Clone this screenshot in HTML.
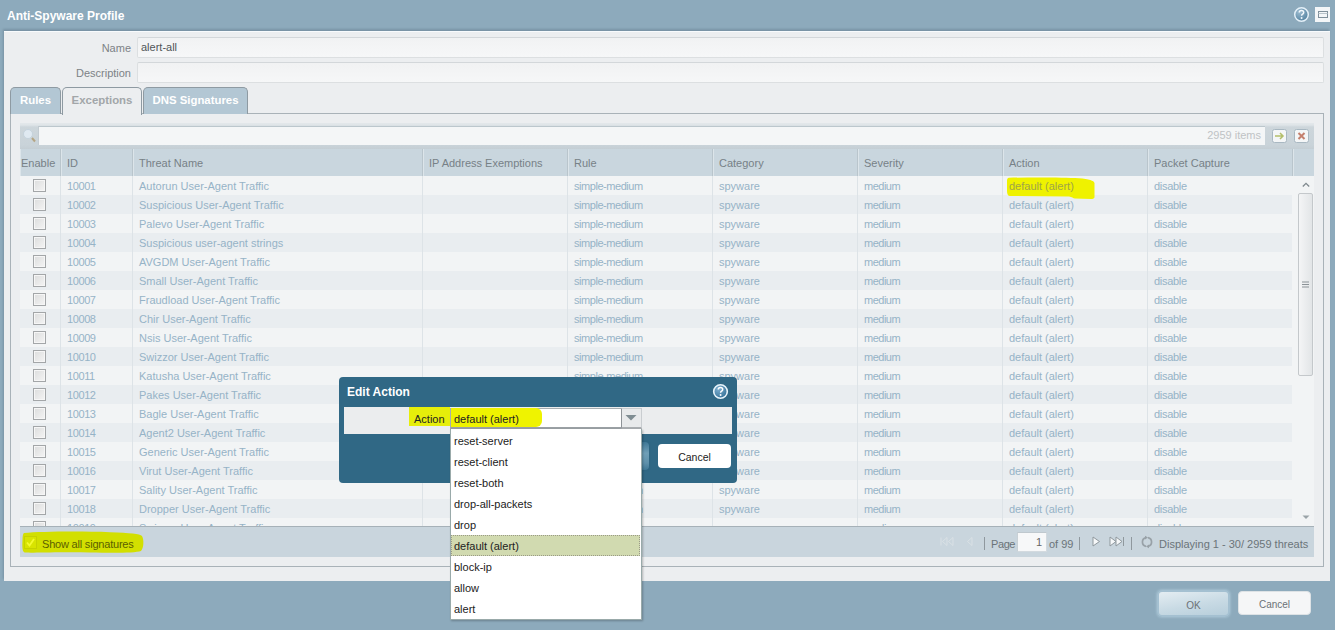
<!DOCTYPE html>
<html><head><meta charset="utf-8">
<style>
*{box-sizing:border-box;margin:0;padding:0}
html,body{width:1335px;height:630px;overflow:hidden}
body{background:#8daabc;font-family:"Liberation Sans",sans-serif;font-size:11px;color:#555;position:relative}
.abs{position:absolute}
#title{position:absolute;left:7px;top:9px;font-weight:bold;font-size:12px;color:#fff;line-height:14px}
#panel{position:absolute;left:4px;top:31px;width:1326px;height:550px;background:#eceef0;box-shadow:-1px -2px 2px rgba(60,80,95,0.25),inset 0 1px 0 #f8fbfd}
.lbl{position:absolute;width:127px;text-align:right;color:#7c8286;line-height:14px}
.inp{position:absolute;left:133px;width:1187px;height:21px;background:linear-gradient(#f1f2f3,#f6f7f8);border:1px solid #dcdfe1;border-top-color:#d3d7da;border-radius:2px;line-height:19px;padding-left:3px;color:#505558}
.tab{position:absolute;top:56px;height:27px;border:1px solid #8e9aa2;border-bottom:none;border-radius:5px 5px 0 0;background:#b3c7d4;color:#fff;font-weight:bold;font-size:11.4px;text-align:center;line-height:25px}
.tab.act{background:#eceef0;color:#a2a6a9;height:28px}
#tabpanel{position:absolute;left:6px;top:82px;width:1314px;height:454px;border:1px solid #a9b2b8;background:#eceef0}
#grid{position:absolute;left:16px;top:92px;width:1294px;height:434px;background:linear-gradient(to bottom,#e3e8eb 0,#dfe5e8 2px,#cdd6db 4px,#c9d3d9 22px,#c4ced4 26px,#c9d6de 26px)}
#search{position:absolute;left:18px;top:3px;width:1227px;height:19px;background:#f4f6f7;border-top:1px solid #bcc7cd;border-left:1px solid #c3ccd2}
#items{position:absolute;right:4px;top:1px;color:#bfc3c5;line-height:14px}
#hdr{position:absolute;left:0;top:26px;width:1294px;height:27px;background:#c9d6de}
.h{position:absolute;top:0;height:27px;line-height:29px;padding-left:6px;color:#778187;border-left:1px solid #b9c5cc;box-shadow:inset 1px 0 0 #dce5ea}
#body{position:absolute;left:0;top:53px;width:1294px;height:350px;overflow:hidden;background:#f2f4f5}
.r{position:absolute;left:0;width:1272px;height:19px;line-height:20px}
.odd{background:#f2f4f5}
.even{background:#e9edf0}
.c{position:absolute;top:0;height:19px;padding-left:6px;color:#96b3c7;border-left:1px solid #dde3e7;white-space:nowrap}
.c0{left:0;width:41px;border-left:none}
.c1{left:40px;width:72px;letter-spacing:-0.4px}
.c2{left:112px;width:290px}
.c3{left:402px;width:145px}
.c4{left:547px;width:145px;letter-spacing:-0.45px}
.c5{left:692px;width:145px}
.c6{left:837px;width:145px;letter-spacing:-0.5px}
.c7{left:982px;width:145px}
.c8{left:1127px;width:145px;letter-spacing:-0.3px}
.cb{position:absolute;left:13px;top:3px;width:13px;height:13px;border:1px solid #a3a6a8;background:linear-gradient(135deg,#dcdddd,#f4f4f4);box-shadow:inset 0 0 0 1px #f6f6f6}
.hl1{position:absolute;left:4px;top:2px;width:72px;height:17px;background:#eff200;border-radius:3px 6px 3px 4px}.hl2{position:absolute;left:62px;top:5px;width:29px;height:18px;background:#eff200;border-radius:2px 4px 3px 8px}
#vscroll{position:absolute;left:1272px;top:0;width:22px;height:350px;background:#f2f4f5}
#footer{position:absolute;left:0;top:403px;width:1294px;height:31px;background:#c9d5dd;border-top:1px solid #a6b1b8}
.btn{position:absolute;height:25px;border-radius:4px;text-align:center;line-height:25px;color:#5f6569;font-size:12px}
#dlg{position:absolute;left:339px;top:377px;width:398px;height:106px;background:#306885;border-radius:4px}
#dlgt{position:absolute;left:8px;top:8px;color:#fff;font-weight:bold;font-size:12px;line-height:14px}
#dbar{position:absolute;left:5px;top:30px;width:388px;height:27px;background:#ebedee}
#list{position:absolute;left:450px;top:429px;width:192px;height:191px;background:#fff;border:1px solid #9aa;border-top:none;box-shadow:1px 1px 2px rgba(0,0,0,.25)}
.li{position:absolute;left:0;width:189px;height:21px;line-height:24px;padding-left:3px;color:#222;font-size:11px}
</style></head><body>
<div id="title">Anti-Spyware Profile</div>
<svg class="abs" style="left:1293px;top:6px" width="17" height="17" viewBox="0 0 17 17"><defs><radialGradient id="hg" cx="0.35" cy="0.3" r="0.8"><stop offset="0" stop-color="#9dbcd0"/><stop offset="1" stop-color="#4f7f9e"/></radialGradient></defs><circle cx="8.5" cy="8.5" r="6.8" fill="url(#hg)" stroke="#e4f0f8" stroke-width="1.5"/><path d="M6.3 6.6 Q6.3 4.6 8.5 4.6 Q10.7 4.6 10.7 6.5 Q10.7 7.7 9.3 8.3 Q8.6 8.7 8.6 9.8" fill="none" stroke="#f2f8fc" stroke-width="1.5"/><circle cx="8.6" cy="12" r="0.95" fill="#f2f8fc"/></svg>
<svg class="abs" style="left:1315px;top:7px" width="15" height="15" viewBox="0 0 15 15"><rect x="0" y="0" width="15" height="15" fill="#f3f6f8"/><rect x="3.5" y="4.5" width="9" height="6" fill="none" stroke="#7f8f9a" stroke-width="1"/><line x1="3.5" y1="6.5" x2="12.5" y2="6.5" stroke="#b9c4cb" stroke-width="1"/></svg>
<div id="panel">
  <div class="lbl" style="left:0;top:10px">Name</div>
  <div class="inp" style="top:6px">alert-all</div>
  <div class="lbl" style="left:0;top:35px">Description</div>
  <div class="inp" style="top:31px"></div>
  <div id="tabpanel"></div>
  <div class="tab" style="left:6px;width:51px">Rules</div>
  <div class="tab act" style="left:58px;width:80px">Exceptions</div>
  <div class="tab" style="left:139px;width:105px">DNS Signatures</div>
  <div id="grid">
    <svg class="abs" style="left:2px;top:4px" width="16" height="16" viewBox="0 0 16 16"><circle cx="6" cy="7" r="4.5" fill="#dfe9f1" stroke="#c0cfd9" stroke-width="0.8"/><line x1="10" y1="11" x2="13" y2="14.5" stroke="#b5a583" stroke-width="2"/></svg>
    <div id="search"><div id="items">2959 items</div></div>
    <svg class="abs" style="left:1252px;top:6px" width="15" height="14" viewBox="0 0 15 14"><rect x="0.5" y="0.5" width="14" height="13" rx="2" fill="#f4f6f7" stroke="#a9b8c2"/><path d="M3 7 H11 M8 4 L11 7 L8 10" stroke="#b3be6a" stroke-width="1.5" fill="none"/></svg>
    <svg class="abs" style="left:1274px;top:6px" width="15" height="14" viewBox="0 0 15 14"><rect x="0.5" y="0.5" width="14" height="13" rx="2" fill="#f4f6f7" stroke="#a9b8c2"/><path d="M4.5 4 L10.5 10 M10.5 4 L4.5 10" stroke="#c4806e" stroke-width="2" fill="none"/></svg>
    <div id="hdr">
      <div class="h" style="left:0;width:41px;border-left:none;padding-left:1px">Enable</div>
      <div class="h" style="left:40px;width:72px">ID</div>
      <div class="h" style="left:112px;width:290px">Threat Name</div>
      <div class="h" style="left:402px;width:145px">IP Address Exemptions</div>
      <div class="h" style="left:547px;width:145px">Rule</div>
      <div class="h" style="left:692px;width:145px">Category</div>
      <div class="h" style="left:837px;width:145px">Severity</div>
      <div class="h" style="left:982px;width:145px">Action</div>
      <div class="h" style="left:1127px;width:145px">Packet Capture</div>
      <div class="h" style="left:1272px;width:22px"></div>
    </div>
    <div id="body">
<div class="r odd" style="top:0px;z-index:2"><div class="c c0"><i class="cb"></i></div><div class="c c1">10001</div><div class="c c2">Autorun User-Agent Traffic</div><div class="c c3"></div><div class="c c4">simple-medium</div><div class="c c5">spyware</div><div class="c c6">medium</div><div class="c c7"><svg style="position:absolute;left:0;top:0" width="100" height="26" viewBox="0 0 100 26"><path d="M6 1.8 C30 1.2 60 1.4 76 2.2 C86 3 91 4.5 91.5 7 L91.5 21 C91.5 22.5 90 23 88 23 L72 22.6 C70 22.4 69 21 66 20.6 L7 20 C5 20 4 18 4 15 L4 5 C4 3 4.5 2 6 1.8 Z" fill="#eff200"/></svg><span style="position:relative;color:#9ea548">default (alert)</span></div><div class="c c8">disable</div></div>
<div class="r even" style="top:19px"><div class="c c0"><i class="cb"></i></div><div class="c c1">10002</div><div class="c c2">Suspicious User-Agent Traffic</div><div class="c c3"></div><div class="c c4">simple-medium</div><div class="c c5">spyware</div><div class="c c6">medium</div><div class="c c7">default (alert)</div><div class="c c8">disable</div></div>
<div class="r odd" style="top:38px"><div class="c c0"><i class="cb"></i></div><div class="c c1">10003</div><div class="c c2">Palevo User-Agent Traffic</div><div class="c c3"></div><div class="c c4">simple-medium</div><div class="c c5">spyware</div><div class="c c6">medium</div><div class="c c7">default (alert)</div><div class="c c8">disable</div></div>
<div class="r even" style="top:57px"><div class="c c0"><i class="cb"></i></div><div class="c c1">10004</div><div class="c c2">Suspicious user-agent strings</div><div class="c c3"></div><div class="c c4">simple-medium</div><div class="c c5">spyware</div><div class="c c6">medium</div><div class="c c7">default (alert)</div><div class="c c8">disable</div></div>
<div class="r odd" style="top:76px"><div class="c c0"><i class="cb"></i></div><div class="c c1">10005</div><div class="c c2">AVGDM User-Agent Traffic</div><div class="c c3"></div><div class="c c4">simple-medium</div><div class="c c5">spyware</div><div class="c c6">medium</div><div class="c c7">default (alert)</div><div class="c c8">disable</div></div>
<div class="r even" style="top:95px"><div class="c c0"><i class="cb"></i></div><div class="c c1">10006</div><div class="c c2">Small User-Agent Traffic</div><div class="c c3"></div><div class="c c4">simple-medium</div><div class="c c5">spyware</div><div class="c c6">medium</div><div class="c c7">default (alert)</div><div class="c c8">disable</div></div>
<div class="r odd" style="top:114px"><div class="c c0"><i class="cb"></i></div><div class="c c1">10007</div><div class="c c2">Fraudload User-Agent Traffic</div><div class="c c3"></div><div class="c c4">simple-medium</div><div class="c c5">spyware</div><div class="c c6">medium</div><div class="c c7">default (alert)</div><div class="c c8">disable</div></div>
<div class="r even" style="top:133px"><div class="c c0"><i class="cb"></i></div><div class="c c1">10008</div><div class="c c2">Chir User-Agent Traffic</div><div class="c c3"></div><div class="c c4">simple-medium</div><div class="c c5">spyware</div><div class="c c6">medium</div><div class="c c7">default (alert)</div><div class="c c8">disable</div></div>
<div class="r odd" style="top:152px"><div class="c c0"><i class="cb"></i></div><div class="c c1">10009</div><div class="c c2">Nsis User-Agent Traffic</div><div class="c c3"></div><div class="c c4">simple-medium</div><div class="c c5">spyware</div><div class="c c6">medium</div><div class="c c7">default (alert)</div><div class="c c8">disable</div></div>
<div class="r even" style="top:171px"><div class="c c0"><i class="cb"></i></div><div class="c c1">10010</div><div class="c c2">Swizzor User-Agent Traffic</div><div class="c c3"></div><div class="c c4">simple-medium</div><div class="c c5">spyware</div><div class="c c6">medium</div><div class="c c7">default (alert)</div><div class="c c8">disable</div></div>
<div class="r odd" style="top:190px"><div class="c c0"><i class="cb"></i></div><div class="c c1">10011</div><div class="c c2">Katusha User-Agent Traffic</div><div class="c c3"></div><div class="c c4">simple-medium</div><div class="c c5">spyware</div><div class="c c6">medium</div><div class="c c7">default (alert)</div><div class="c c8">disable</div></div>
<div class="r even" style="top:209px"><div class="c c0"><i class="cb"></i></div><div class="c c1">10012</div><div class="c c2">Pakes User-Agent Traffic</div><div class="c c3"></div><div class="c c4">simple-medium</div><div class="c c5">spyware</div><div class="c c6">medium</div><div class="c c7">default (alert)</div><div class="c c8">disable</div></div>
<div class="r odd" style="top:228px"><div class="c c0"><i class="cb"></i></div><div class="c c1">10013</div><div class="c c2">Bagle User-Agent Traffic</div><div class="c c3"></div><div class="c c4">simple-medium</div><div class="c c5">spyware</div><div class="c c6">medium</div><div class="c c7">default (alert)</div><div class="c c8">disable</div></div>
<div class="r even" style="top:247px"><div class="c c0"><i class="cb"></i></div><div class="c c1">10014</div><div class="c c2">Agent2 User-Agent Traffic</div><div class="c c3"></div><div class="c c4">simple-medium</div><div class="c c5">spyware</div><div class="c c6">medium</div><div class="c c7">default (alert)</div><div class="c c8">disable</div></div>
<div class="r odd" style="top:266px"><div class="c c0"><i class="cb"></i></div><div class="c c1">10015</div><div class="c c2">Generic User-Agent Traffic</div><div class="c c3"></div><div class="c c4">simple-medium</div><div class="c c5">spyware</div><div class="c c6">medium</div><div class="c c7">default (alert)</div><div class="c c8">disable</div></div>
<div class="r even" style="top:285px"><div class="c c0"><i class="cb"></i></div><div class="c c1">10016</div><div class="c c2">Virut User-Agent Traffic</div><div class="c c3"></div><div class="c c4">simple-medium</div><div class="c c5">spyware</div><div class="c c6">medium</div><div class="c c7">default (alert)</div><div class="c c8">disable</div></div>
<div class="r odd" style="top:304px"><div class="c c0"><i class="cb"></i></div><div class="c c1">10017</div><div class="c c2">Sality User-Agent Traffic</div><div class="c c3"></div><div class="c c4">simple-medium</div><div class="c c5">spyware</div><div class="c c6">medium</div><div class="c c7">default (alert)</div><div class="c c8">disable</div></div>
<div class="r even" style="top:323px"><div class="c c0"><i class="cb"></i></div><div class="c c1">10018</div><div class="c c2">Dropper User-Agent Traffic</div><div class="c c3"></div><div class="c c4">simple-medium</div><div class="c c5">spyware</div><div class="c c6">medium</div><div class="c c7">default (alert)</div><div class="c c8">disable</div></div>
<div class="r odd" style="top:342px"><div class="c c0"><i class="cb"></i></div><div class="c c1">10019</div><div class="c c2">Swizzor User-Agent Traffic</div><div class="c c3"></div><div class="c c4">simple-medium</div><div class="c c5">spyware</div><div class="c c6">medium</div><div class="c c7">default (alert)</div><div class="c c8">disable</div></div>
      <div id="vscroll">
        
        <svg class="abs" style="left:10px;top:6px" width="8" height="5" viewBox="0 0 8 5"><path d="M0.8 4.5 L4 1.3 L7.2 4.5" fill="none" stroke="#7f898e" stroke-width="1.3"/></svg>
        <div class="abs" style="left:6px;top:17px;width:15px;height:183px;border:1px solid #c4c8cb;border-radius:2px;background:linear-gradient(to right,#f4f5f6,#e2e5e7)"></div>
        <svg class="abs" style="left:10px;top:105px" width="8" height="7" viewBox="0 0 8 7"><path d="M0 1 H7 M0 3.5 H7 M0 6 H7" stroke="#8b9297" stroke-width="1"/></svg>
        <svg class="abs" style="left:10px;top:339px" width="8" height="5" viewBox="0 0 8 5"><path d="M0.5 0.5 L7.5 0.5 L4 4 Z" fill="#9aa3a8"/></svg>
      </div>
    </div>
    <div id="footer"></div>
  </div>
</div>

<svg class="abs" style="left:20px;top:528px" width="128" height="28" viewBox="0 0 128 28"><path d="M4 5 C20 3.5 60 3 90 4.2 C110 5 120 5.5 122 8 C124 11 124 20 121 23 C115 25 95 25 70 24.5 C40 24 15 25 5 24.5 C2.5 24 2 20 2.5 12 C2.6 8 3 5.5 4 5 Z" fill="#d2df00"/></svg>
<div class="abs" style="left:24px;top:536px;width:13px;height:13px;background:#d8e400;border:1px solid #c6d100"></div>
<svg class="abs" style="left:25px;top:537px" width="11" height="11" viewBox="0 0 11 11"><path d="M2 5.5 L4.5 8.5 L9 2" fill="none" stroke="#f4fa30" stroke-width="1.8"/></svg>
<div class="abs" style="left:42px;top:537px;color:#5b6000;line-height:14px;font-size:11px;letter-spacing:-0.2px">Show all signatures</div>
<svg class="abs" style="left:940px;top:537px" width="15" height="9" viewBox="0 0 15 9"><path d="M1 0.5 V8.5 M7 0.5 L2.5 4.5 L7 8.5 Z M13 0.5 L8.5 4.5 L13 8.5 Z" fill="none" stroke="#d9e0e5" stroke-width="1"/></svg>
<svg class="abs" style="left:966px;top:537px" width="7" height="9" viewBox="0 0 7 9"><path d="M6 0.5 L1.5 4.5 L6 8.5 Z" fill="none" stroke="#d9e0e5" stroke-width="1"/></svg>
<div class="abs" style="left:984px;top:537px;width:1px;height:13px;background:#8f989e"></div>
<div class="abs" style="left:991px;top:537px;color:#6b7479;line-height:14px;font-size:11px;letter-spacing:-0.4px">Page</div>
<div class="abs" style="left:1017px;top:532px;width:30px;height:20px;background:#f7f8f9;border:1px solid #d3dadf;border-top-color:#bfc8ce;border-left-color:#c8d0d5;text-align:right;padding-right:4px;line-height:19px;color:#666;font-size:11px">1</div>
<div class="abs" style="left:1049px;top:537px;color:#6b7479;line-height:14px;font-size:11px">of 99</div>
<div class="abs" style="left:1079px;top:537px;width:1px;height:13px;background:#8f989e"></div>
<svg class="abs" style="left:1092px;top:536px" width="9" height="11" viewBox="0 0 9 11"><path d="M1 1 L7.5 5.5 L1 10 Z" fill="#f6f8f9" stroke="#8f989d" stroke-width="1" stroke-linejoin="round"/></svg>
<svg class="abs" style="left:1109px;top:536px" width="16" height="11" viewBox="0 0 16 11"><path d="M1 1 L7 5.5 L1 10 Z M7 1 L13 5.5 L7 10 Z" fill="#f6f8f9" stroke="#8f989d" stroke-width="1" stroke-linejoin="round"/><path d="M14.5 1 V10" stroke="#8f989d" stroke-width="1"/></svg>
<div class="abs" style="left:1131px;top:537px;width:1px;height:13px;background:#8f989e"></div>
<svg class="abs" style="left:1140px;top:535px" width="14" height="14" viewBox="0 0 14 14"><path d="M6 2.6 A4.5 4.5 0 0 0 6 11.4 M8 11.4 A4.5 4.5 0 0 0 8 2.6" fill="none" stroke="#98a1a7" stroke-width="1.7"/><path d="M5 0.8 L8 2.6 L5 4.6 Z M9 9.4 L6 11.4 L9 13.2 Z" fill="#98a1a7"/></svg>
<div class="abs" style="left:1159px;top:537px;color:#6b7479;line-height:14px;font-size:11px">Displaying 1 - 30/ 2959 threats</div>
<div class="btn" style="left:1157px;top:590px;width:73px;height:27px;line-height:27px;font-size:10px;color:#6b7276;background:linear-gradient(170deg,#e4edf2,#c8dae4 55%,#b7cedb);border:2px solid #a4c0d1;border-radius:5px;box-shadow:0 0 2px 1px #9fbccd">OK</div>
<div class="btn" style="left:1238px;top:591px;width:73px;height:24px;line-height:25px;font-size:10px;color:#6b7276;background:#f5f6f7;border:1px solid #dde2e5">Cancel</div>
<div id="dlg">
  <div id="dlgt">Edit Action</div>
  <div id="dbar">
    <div class="abs" style="left:65px;top:0px;width:41px;height:19px;background:#e6ee0a"></div>
    <div class="abs" style="left:70px;top:5px;color:#222;line-height:14px;font-size:11px">Action</div>
    <div class="abs" style="left:106px;top:1px;width:172px;height:21px;background:#fff;border:1px solid #a7adb1;border-bottom:2px solid #9aa0a4"></div>
    <div class="abs" style="left:107px;top:1px;width:91px;height:19px;background:#eff300;border-radius:0 6px 6px 0"></div>
    <div class="abs" style="left:110px;top:5px;color:#222;line-height:14px;font-size:11px">default (alert)</div>
    <div class="abs" style="left:277px;top:1px;width:21px;height:21px;background:#e8eaeb;border:1px solid #c9cdd0;border-left:1px solid #8e9397;border-bottom:2px solid #a9adb0"></div>
    <svg class="abs" style="left:281px;top:7px" width="12" height="8" viewBox="0 0 12 8"><path d="M0.5 1 L11.5 1 L6 6.5 Z" fill="#7f8d92"/></svg>
  </div>
  <div class="abs" style="left:288px;top:65px;width:22px;height:28px;background:linear-gradient(to bottom,#3f7896,#6f9fb7 40%,#5e91ab 75%,#3f7896);border-radius:4px;box-shadow:0 0 2px #2a5f7c"></div>
  <div class="btn" style="left:319px;top:67px;width:73px;height:24px;line-height:27px;background:#fff;color:#222;font-size:10.5px">Cancel</div>
  <svg class="abs" style="left:373px;top:6px" width="17" height="17" viewBox="0 0 17 17"><defs><radialGradient id="hg2" cx="0.35" cy="0.3" r="0.8"><stop offset="0" stop-color="#7fb0d0"/><stop offset="1" stop-color="#2f6d94"/></radialGradient></defs><circle cx="8.5" cy="8.5" r="6.8" fill="url(#hg2)" stroke="#e8f4fb" stroke-width="1.6"/><path d="M6.3 6.6 Q6.3 4.6 8.5 4.6 Q10.7 4.6 10.7 6.5 Q10.7 7.7 9.3 8.3 Q8.6 8.7 8.6 9.8" fill="none" stroke="#fff" stroke-width="1.5"/><circle cx="8.6" cy="12" r="0.95" fill="#fff"/></svg>
</div>
<div id="list">
  <div class="li" style="top:0">reset-server</div>
  <div class="li" style="top:21px">reset-client</div>
  <div class="li" style="top:42px">reset-both</div>
  <div class="li" style="top:63px">drop-all-packets</div>
  <div class="li" style="top:84px">drop</div>
  <div class="li" style="top:106px;background:#d1dab0;border:1px dotted #9a9a88;padding-left:2px;line-height:20px">default (alert)</div>
  <div class="li" style="top:126px">block-ip</div>
  <div class="li" style="top:147px">allow</div>
  <div class="li" style="top:168px">alert</div>
</div>
</body></html>
